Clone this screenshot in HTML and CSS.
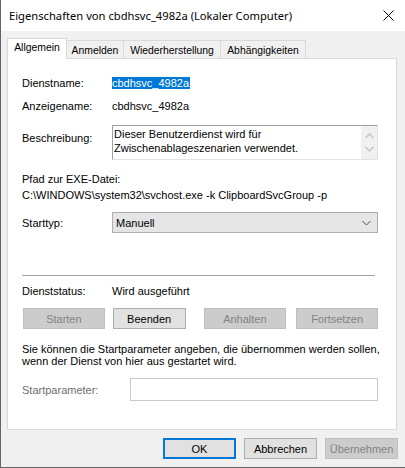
FILE: index.html
```html
<!DOCTYPE html>
<html lang="de">
<head>
<meta charset="utf-8">
<link rel="stylesheet" href="styles.css">
</head>
<body>
<div class="window">
  <div class="titlebar">
    <span class="title">Eigenschaften von cbdhsvc_4982a (Lokaler Computer)</span>
    <svg class="close" width="11" height="11" viewBox="0 0 11 11"><path d="M0.5 0.5L10.5 10.5M10.5 0.5L0.5 10.5" stroke="#000" stroke-width="1" fill="none"/></svg>
  </div>
  <div class="main">
    <div class="tabs">
      <div class="tab sel t1">Allgemein</div>
      <div class="tab t2">Anmelden</div>
      <div class="tab t3">Wiederherstellung</div>
      <div class="tab t4">Abhängigkeiten</div>
    </div>
    <div class="panel">
      <div class="row r1"><span class="lbl">Dienstname:</span><span class="val"><span class="hl">cbdhsvc_4982a</span></span></div>
      <div class="row r2"><span class="lbl">Anzeigename:</span><span class="val">cbdhsvc_4982a</span></div>
      <div class="row r3"><span class="lbl lbl3">Beschreibung:</span>
        <div class="desc">
          <div class="desctext">Dieser Benutzerdienst wird für<br>Zwischenablageszenarien verwendet.</div>
          <div class="scroll">
            <svg width="9" height="6" viewBox="0 0 9 6"><path d="M0.5 5L4.5 1L8.5 5" stroke="#c4c4c4" stroke-width="1.3" fill="none"/></svg>
            <svg width="9" height="6" viewBox="0 0 9 6"><path d="M0.5 1L4.5 5L8.5 1" stroke="#c4c4c4" stroke-width="1.3" fill="none"/></svg>
          </div>
        </div>
      </div>
      <div class="path">
        <div class="pl">Pfad zur EXE-Datei:</div>
        <div class="pl">C:\WINDOWS\system32\svchost.exe -k ClipboardSvcGroup -p</div>
      </div>
      <div class="row r6"><span class="lbl">Starttyp:</span>
        <div class="combo"><span>Manuell</span>
          <svg width="9" height="6" viewBox="0 0 9 6"><path d="M0.5 1L4.5 5L8.5 1" stroke="#505050" stroke-width="1" fill="none"/></svg>
        </div>
      </div>
      <div class="sep"></div>
      <div class="row r7"><span class="lbl">Dienststatus:</span><span class="val">Wird ausgeführt</span></div>
      <div class="btnrow">
        <div class="btn dis w82">Starten</div>
        <div class="btn w72">Beenden</div>
        <div class="btn dis w83">Anhalten</div>
        <div class="btn dis w82">Fortsetzen</div>
      </div>
      <div class="para">Sie können die Startparameter angeben, die übernommen werden sollen,<br>wenn der Dienst von hier aus gestartet wird.</div>
      <div class="row r9"><span class="lbl gray">Startparameter:</span><div class="input"></div></div>
    </div>
    <div class="footer">
      <div class="btn fb def">OK</div>
      <div class="btn fb">Abbrechen</div>
      <div class="btn fb dis">Übernehmen</div>
    </div>
  </div>
</div>
</body>
</html>
```
FILE: styles.css
```css
html, body {
  margin: 0;
  padding: 0;
  background: #ffffff;
}
.window {
  width: 405px;
  height: 468px;
  box-sizing: border-box;
  border-left: 1px solid #646464;
  border-bottom: 1px solid #646464;
  background: #f0f0f0;
  font-family: "Liberation Sans", Arial, sans-serif;
  font-size: 11px;
  color: #000;
  overflow: hidden;
}
.titlebar {
  height: 31px;
  background: #ffffff;
  display: flex;
  align-items: center;
  padding-left: 8px;
}
.title {
  font-family: "Noto Sans", sans-serif;
  font-size: 11.2px;
  color: #000;
  margin-top: -1px;
}
.close {
  margin-left: auto;
  margin-right: 11px;
}
.main {
  padding: 7px 0 0 6px;
}
.tabs {
  display: flex;
  align-items: flex-end;
  height: 20px;
}
.tab {
  height: 18px;
  box-sizing: border-box;
  border: 1px solid #d9d9d9;
  border-bottom: none;
  border-left: none;
  display: flex;
  align-items: center;
  justify-content: center;
  padding-top: 1px;
  background: #f0f0f0;
  font-size: 10.4px;
}
.tab.sel {
  height: 21px;
  border-left: 1px solid #d9d9d9;
  background: #ffffff;
  margin-bottom: -1px;
  position: relative;
  z-index: 1;
  padding-top: 0;
  padding-bottom: 3px;
}
.t1 { width: 60px; }
.t2 { width: 57px; }
.t3 { width: 97px; }
.t4 { width: 85px; }
.panel {
  width: 390px;
  height: 372px;
  box-sizing: border-box;
  border: 1px solid #d9d9d9;
  background: #ffffff;
  padding: 17px 18px 0 14px;
}
.row {
  display: grid;
  grid-template-columns: 90px 1fr;
  line-height: 14px;
}
.r2 { margin-top: 9px; }
.r3 { margin-top: 12px; }
.lbl3 { padding-top: 6px; }
.hl {
  background: #0078d7;
  color: #ffffff;
  display: inline-block;
  height: 12px;
  line-height: 12px;
  padding: 0 1px 0 0;
  margin-top: 1px;
}
.desc {
  height: 35px;
  box-sizing: border-box;
  border-top: 1px solid #a0a0a0;
  border-left: 1px solid #a0a0a0;
  border-right: 1px solid #e3e3e3;
  border-bottom: 1px solid #e3e3e3;
  display: flex;
}
.desctext {
  flex: 1;
  padding: 1px 0 0 1px;
  line-height: 14px;
}
.scroll {
  width: 16px;
  background: #f0f0f0;
  display: flex;
  flex-direction: column;
  align-items: center;
  justify-content: space-around;
  padding: 3px 0;
}
.path {
  margin-top: 11px;
  line-height: 16px;
}
.r6 {
  margin-top: 9px;
  align-items: center;
}
.combo {
  height: 21px;
  box-sizing: border-box;
  border: 1px solid #adadad;
  background: #e5e5e5;
  display: flex;
  align-items: center;
  justify-content: space-between;
  padding: 0 6px 0 3px;
}
.sep {
  margin-top: 42px;
  height: 1px;
  background: #a0a0a0;
  margin-right: 3px;
}
.r7 { margin-top: 8px; }
.btnrow {
  display: flex;
  margin-top: 10px;
  margin-left: 1px;
}
.btn {
  height: 21px;
  box-sizing: border-box;
  border: 1px solid #adadad;
  background: #e1e1e1;
  display: flex;
  align-items: center;
  justify-content: center;
}
.btn.dis {
  background: #cccccc;
  border-color: #bfbfbf;
  color: #838383;
}
.w82 { width: 82px; }
.w72 { width: 73px; }
.w83 { width: 83px; }
.btnrow .btn + .btn { margin-left: 8px; }
.btnrow .btn:nth-child(3) { margin-left: 18px; }
.btnrow .btn:nth-child(4) { margin-left: 10px; }
.para {
  margin-top: 14px;
  line-height: 12px;
  white-space: nowrap;
}
.r9 {
  margin-top: 11px;
  grid-template-columns: 108px 1fr;
  align-items: center;
}
.gray { color: #6d6d6d; }
.input {
  height: 23px;
  box-sizing: border-box;
  border: 1px solid #c8c8c8;
  background: #ffffff;
}
.footer {
  display: flex;
  justify-content: flex-end;
  gap: 8px;
  padding: 8px 7px 0 0;
}
.fb { width: 73px; }
.btn.def {
  border: 2px solid #0078d7;
}
```
